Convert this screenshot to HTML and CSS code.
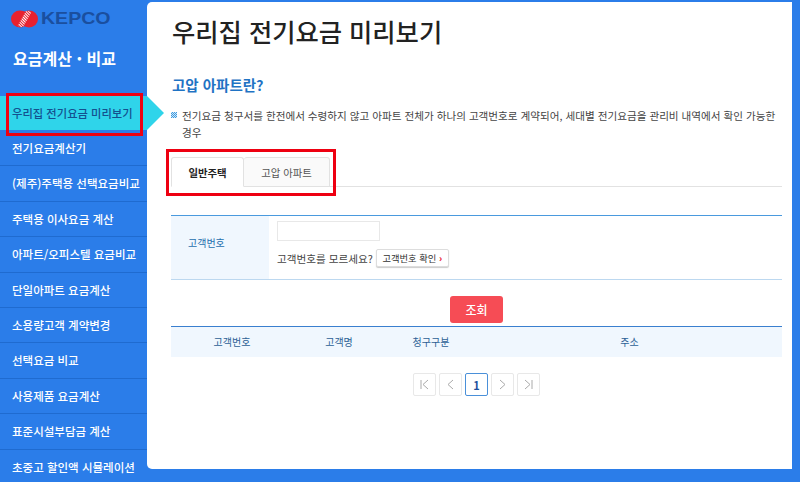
FILE: index.html
```html
<!DOCTYPE html>
<html lang="ko">

<head>
    <meta charset="UTF-8">
    <title>우리집 전기요금 미리보기</title>
    <link rel="stylesheet" href="styles.css">
</head>

<body>
    <div class="side">
        <div class="logo">
            <svg width="27" height="18" viewBox="0 0 27 18">
                <defs>
                    <pattern id="st" width="2" height="2" patternUnits="userSpaceOnUse" patternTransform="rotate(45)">
                        <rect width="2" height="1" fill="#fff"/>
                    </pattern>
                    <clipPath id="mid"><path d="M6 17L15 1h6L12 17z"/></clipPath>
                </defs>
                <ellipse cx="9" cy="9" rx="9" ry="8.5" fill="#e8212f"/>
                <ellipse cx="18" cy="9" rx="9" ry="8.5" fill="#e8212f"/>
                <ellipse cx="13.5" cy="9" rx="11" ry="8.5" fill="url(#st)" clip-path="url(#mid)"/>
            </svg>
            <span class="logo-txt">KEPCO</span>
        </div>
        <h2 class="side-tit">요금계산 <b>·</b> 비교</h2>
        <ul class="menu">
            <li class="on">우리집 전기요금 미리보기</li>
            <li>전기요금계산기</li>
            <li>(제주)주택용 선택요금비교</li>
            <li>주택용 이사요금 계산</li>
            <li>아파트/오피스텔 요금비교</li>
            <li>단일아파트 요금계산</li>
            <li>소용량고객 계약변경</li>
            <li>선택요금 비교</li>
            <li>사용제품 요금계산</li>
            <li>표준시설부담금 계산</li>
            <li>초중고 할인액 시뮬레이션</li>
        </ul>
    </div>

    <div class="main">
        <h1 class="tit">우리집 전기요금 미리보기</h1>
        <h3 class="sub">고압 아파트란?</h3>
        <p class="desc">전기요금 청구서를 한전에서 수령하지 않고 아파트 전체가 하나의 고객번호로 계약되어, 세대별 전기요금을 관리비 내역에서 확인 가능한 경우</p>

        <div class="tabs">
            <a class="tab on">일반주택</a>
            <a class="tab">고압 아파트</a>
        </div>

        <div class="form-row">
            <div class="form-th">고객번호</div>
            <div class="form-td">
                <input type="text" class="inp">
                <div class="ask">고객번호를 모르세요? <button class="btn-s">고객번호 확인 <i>›</i></button></div>
            </div>
        </div>

        <div class="btn-wrap"><button class="btn-red">조회</button></div>

        <div class="thead">
            <span class="c1">고객번호</span>
            <span class="c2">고객명</span>
            <span class="c2">청구구분</span>
            <span class="c3">주소</span>
        </div>

        <div class="paging">
            <a><svg width="11" height="11" viewBox="0 0 11 11"><path d="M2 1v9M9 1L4 5.5 9 10" /></svg></a>
            <a><svg width="11" height="11" viewBox="0 0 11 11"><path d="M8 1L3 5.5 8 10" /></svg></a>
            <a class="on">1</a>
            <a><svg width="11" height="11" viewBox="0 0 11 11"><path d="M3 1l5 4.5L3 10" /></svg></a>
            <a><svg width="11" height="11" viewBox="0 0 11 11"><path d="M9 1v9M2 1l5 4.5L2 10" /></svg></a>
        </div>
    </div>

    <div class="red-box box1"></div>
    <div class="red-box box2"></div>
</body>

</html>
```

FILE: styles.css
```css
* {
    margin: 0;
    padding: 0;
    box-sizing: border-box;
    list-style: none;
}

html, body {
    height: 482px;
    overflow: hidden;
}

body {
    display: flex;
    position: relative;
    background: #2b7de9;
    font-family: "Noto Sans CJK KR", "Noto Sans", sans-serif;
    color: #333;
}

/* left menu */
.side {
    width: 147px;
    flex: none;
    height: 482px;
}

.logo {
    display: flex;
    align-items: center;
    gap: 3px;
    height: 18px;
    margin: 10px 0 0 11px;
}

.logo-txt {
    font-family: "Liberation Sans", sans-serif;
    font-size: 17px;
    font-weight: 700;
    line-height: 18px;
    color: #1a4f9f;
    transform: scaleX(1.15);
    transform-origin: left center;
}

.side-tit {
    margin: 15px 0 0 13px;
    height: 53px;
    font-size: 16px;
    line-height: 30px;
    font-weight: 700;
    color: #fff;
}

.side-tit b {
    font-weight: 900;
}

.menu li {
    height: 35.4px;
    padding-left: 12px;
    border-bottom: 1px solid #1f6bd0;
    font-size: 11.5px;
    font-weight: 500;
    line-height: 34px;
    color: #fff;
    white-space: nowrap;
}

.menu li.on {
    position: relative;
    height: 34px;
    border-bottom: 0;
    margin-bottom: 1px;
    background: #2fd4ea;
    font-size: 11.3px;
    color: #14508f;
}

.menu li.on::after {
    content: '';
    position: absolute;
    left: 147px;
    top: 0;
    border-left: 17px solid #2fd4ea;
    border-top: 17px solid transparent;
    border-bottom: 17px solid transparent;
}

/* content panel */
.main {
    width: 645px;
    height: 467px;
    margin-top: 2px;
    padding: 0 10px 0 24px;
    background: #fff;
    border-radius: 5px 0 0 5px;
}

.tit {
    margin: 11px 0 0 1px;
    font-size: 25.3px;
    font-weight: 500;
    line-height: 36px;
    color: #222;
}

.sub {
    margin: 25px 0 0 1px;
    font-size: 14.5px;
    font-weight: 700;
    line-height: 22px;
    color: #1f73c4;
}

.desc {
    position: relative;
    margin: 11px 6px 0 0;
    padding-left: 11px;
    font-size: 10.6px;
    line-height: 17px;
    color: #444;
}

.desc::before {
    content: '';
    position: absolute;
    left: 0;
    top: 5px;
    width: 6px;
    height: 6px;
    background: repeating-conic-gradient(#3d9be0 0 25%, #cfe6f7 0 50%) 0 0 / 2px 2px;
}

.tabs {
    display: flex;
    margin-top: 16px;
    height: 30px;
    border-bottom: 1px solid #e2e2e2;
}

.tab {
    height: 30px;
    font-size: 10.4px;
    line-height: 29px;
    text-align: center;
    border: 1px solid #e2e2e2;
    border-radius: 3px 3px 0 0;
    background: #fafafa;
    color: #555;
}

.tab.on {
    width: 73px;
    background: #fff;
    border-bottom-color: #fff;
    font-weight: 700;
    color: #222;
}

.tab:not(.on) {
    width: 86px;
    border-left: 0;
}

.form-row {
    display: flex;
    margin-top: 28px;
    height: 65px;
    border-top: 1px solid #4a9ade;
    border-bottom: 1px solid #bcd8f0;
}

.form-th {
    width: 98px;
    background: #f0f7fe;
    padding-left: 17px;
    font-size: 10px;
    line-height: 54px;
    color: #1f6fae;
}

.form-td {
    padding: 5px 0 0 8px;
}

.inp {
    display: block;
    width: 103px;
    height: 20px;
    border: 1px solid #e8e8e8;
    background: #fff;
}

.ask {
    display: flex;
    align-items: center;
    gap: 3px;
    margin-top: 8px;
    font-size: 10.6px;
    color: #444;
    white-space: nowrap;
}

.btn-s {
    width: 73px;
    height: 18px;
    font-family: inherit;
    font-size: 9.3px;
    color: #333;
    background: #fff;
    border: 1px solid #ddd;
    border-radius: 2px;
    box-shadow: 0 1px 1px #ccc;
}

.btn-s i {
    font-style: normal;
    font-weight: 900;
    color: #e8202e;
}

.btn-wrap {
    display: flex;
    justify-content: center;
    margin-top: 16px;
}

.btn-red {
    width: 53px;
    height: 27px;
    font-family: inherit;
    font-size: 12px;
    font-weight: 500;
    color: #fff;
    background: #f64c55;
    border: 0;
    border-radius: 3px;
}

.thead {
    display: flex;
    margin-top: 3px;
    height: 31px;
    border-top: 1px solid #3a7fcf;
    background: #f0f7fe;
    font-size: 10px;
    line-height: 29px;
    text-align: center;
    color: #2c5f95;
}

.c1 { width: 122px; }
.c2 { width: 92px; }
.c3 { flex: 1; }

.paging {
    display: flex;
    justify-content: center;
    gap: 3px;
    margin-top: 16px;
}

.paging a {
    display: flex;
    align-items: center;
    justify-content: center;
    width: 23px;
    height: 23px;
    border: 1px solid #e8e8e8;
    border-radius: 2px;
    font-size: 11px;
    font-weight: 700;
    color: #1d4f9c;
}

.paging a.on {
    border-color: #4a90d9;
}

.paging svg {
    fill: none;
    stroke: #aaa;
    stroke-width: 1;
}

/* red marks laid over the screenshot */
.red-box {
    position: absolute;
    border: 3px solid #ee0011;
}

.box1 {
    left: 6px;
    top: 93px;
    width: 137px;
    height: 43px;
}

.box2 {
    left: 166px;
    top: 149px;
    width: 170px;
    height: 47px;
}
```
